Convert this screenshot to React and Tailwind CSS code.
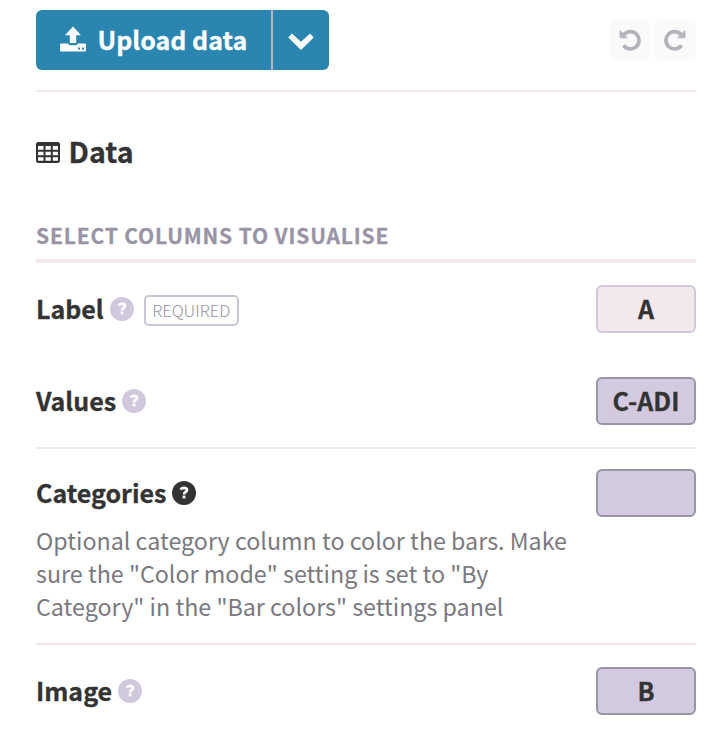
import React from "react";

function UploadIcon() {
  return (
    <svg width="26" height="26" viewBox="0 0 26 26" className="shrink-0">
      <path
        d="M13 0.5 L21 9.3 H16.2 V17 H9.8 V9.3 H5 Z"
        fill="#fff"
      />
      <path
        fillRule="evenodd"
        d="M1.2 17.4 H8 Q8.8 19.2 10.2 19.2 H15.8 Q17.2 19.2 18 17.4 H24.8 Q26 17.4 26 18.6 V24.2 Q26 25.4 24.8 25.4 H1.2 Q0 25.4 0 24.2 V18.6 Q0 17.4 1.2 17.4 Z M18 21.4 V23.4 H20 V21.4 Z M22 21.4 V23.4 H24 V21.4 Z"
        fill="#fff"
      />
    </svg>
  );
}

function ChevronIcon() {
  return (
    <svg width="26" height="18" viewBox="0 0 26 18">
      <path d="M3.9 0.6 L13 8.8 L22.1 0.6 L25.7 4.4 L13 17 L0.3 4.4 Z" fill="#fff" />
    </svg>
  );
}

function UndoIcon({ className = "" }) {
  return (
    <svg width="22" height="22" viewBox="0 0 22 22" className={className}>
      <path d="M5 5.6 A8.6 8.6 0 1 1 4.5 16.4" fill="none" stroke="#b1b4bb" strokeWidth="3.7" />
      <path d="M1 1.6 V8.8 H8.4 Z" fill="#b1b4bb" stroke="#b1b4bb" strokeWidth="0.8" strokeLinejoin="round" />
    </svg>
  );
}

function TableIcon() {
  return (
    <svg width="24" height="21" viewBox="0 0 24 21">
      <path
        fillRule="evenodd"
        fill="#333"
        d="M2.2 0 H21.8 Q24 0 24 2.2 V18.8 Q24 21 21.8 21 H2.2 Q0 21 0 18.8 V2.2 Q0 0 2.2 0 Z M2 4 V7.8 H7.5 V4 Z M9.5 4 V7.8 H14.8 V4 Z M16.8 4 V7.8 H22 V4 Z M2 9.8 V13.2 H7.5 V9.8 Z M9.5 9.8 V13.2 H14.8 V9.8 Z M16.8 9.8 V13.2 H22 V9.8 Z M2 15.2 V18.8 H7.5 V15.2 Z M9.5 15.2 V18.8 H14.8 V15.2 Z M16.8 15.2 V18.8 H22 V15.2 Z"
      />
    </svg>
  );
}

function HelpIcon({ color = "#d1c8de" }) {
  return (
    <svg width="24" height="24" viewBox="0 0 24 24" className="shrink-0">
      <circle cx="12" cy="12" r="12" fill={color} />
      <path
        d="M8.6 8.6 Q9.6 6.8 12 6.8 Q15 6.8 15 9 Q15 10.2 13.5 11 Q12.1 11.8 12.1 13.4"
        fill="none"
        stroke="#fff"
        strokeWidth="2.7"
      />
      <rect x="10.6" y="14.6" width="2.9" height="2.8" fill="#fff" />
    </svg>
  );
}

function Name({ children, color }) {
  return (
    <>
      <span className="-mt-0.5 text-[25px] font-bold leading-[36px] text-[#333] [-webkit-text-stroke:0.3px]">
        {children}
      </span>
      <span className="ml-1.5">
        <HelpIcon color={color} />
      </span>
    </>
  );
}

function ColumnBox({ children, light }) {
  return (
    <div
      className={
        "flex h-12 w-[100px] shrink-0 items-center justify-center rounded-md border-2 text-[25px] font-bold text-[#333] " +
        (light ? "border-[#d1c8de] bg-[#f3e8ec]" : "border-[#9894a5] bg-[#d4cae0]")
      }
    >
      <span className="-mt-0.5 leading-[36px] [-webkit-text-stroke:0.3px]">{children}</span>
    </div>
  );
}

export default function App() {
  return (
    <div className="h-[740px] w-[724px] overflow-hidden bg-white pl-9 pr-7 pt-2.5 font-['Noto_Sans_CJK_SC','Noto_Sans',sans-serif] whitespace-nowrap">
      <header className="flex h-[82px] items-start justify-between border-b-2 border-[#f3e8ec]">
        <div className="flex h-[60px] overflow-hidden rounded-md bg-[#2a85b1]">
          <button className="flex w-[235px] items-center pl-6 text-white">
            <span className="-mt-0.5">
              <UploadIcon />
            </span>
            <span className="-mt-0.5 ml-[11.5px] text-[25px] font-bold leading-[36px] [-webkit-text-stroke:0.3px]">
              Upload data
            </span>
          </button>
          <button className="flex w-[58px] items-center justify-center border-l-2 border-[#b5b9bf] pt-1">
            <ChevronIcon />
          </button>
        </div>
        <div className="flex gap-[3px] pt-2.5">
          <span className="flex h-10 w-[42px] items-center justify-center rounded-md bg-[#fcf9fa]">
            <UndoIcon />
          </span>
          <span className="flex h-10 w-[42px] items-center justify-center rounded-md bg-[#fcf9fa]">
            <UndoIcon className="-scale-x-100" />
          </span>
        </div>
      </header>

      <h1 className="mt-10 flex h-10 items-center gap-[8.5px] text-[28.6px] font-bold leading-10 text-[#333]">
        <TableIcon />
        <span className="-mt-0.5 [-webkit-text-stroke:0.3px]">Data</span>
      </h1>

      <h2 className="mt-[45px] flex h-[46px] items-start border-b-4 border-[#f3e8ec] text-[21px] font-bold leading-[36px] tracking-[0.84px] text-[#9995a6] [-webkit-text-stroke:0.3px]">
        SELECT COLUMNS TO VISUALISE
      </h2>

      <div className="mt-[22px] flex h-12 items-center justify-between">
        <div className="flex items-center">
          <Name>Label</Name>
          <span className="ml-2.5 mt-0.5 flex h-[31px] w-[95px] items-center justify-center rounded-[5px] border-2 border-[#cbc5da] text-[16.5px] font-light leading-[24px] text-[#9995a6]">
            REQUIRED
          </span>
        </div>
        <ColumnBox light>A</ColumnBox>
      </div>

      <div className="mt-11 flex h-[72px] items-start justify-between border-b-2 border-[#f3e8ec]">
        <div className="flex h-12 items-center">
          <Name>Values</Name>
        </div>
        <ColumnBox>C-ADI</ColumnBox>
      </div>

      <div className="flex h-[196px] items-start justify-between border-b-2 border-[#f3e8ec] pt-5">
        <div>
          <div className="flex h-12 items-center">
            <Name color="#333">Categories</Name>
          </div>
          <p className="mt-[7px] text-[23.28px] leading-[33px] text-[#7b7980]">
            Optional category column to color the bars. Make
            <br />
            sure the "Color mode" setting is set to "By
            <br />
            Category" in the "Bar colors" settings panel
          </p>
        </div>
        <ColumnBox />
      </div>

      <div className="mt-[22px] flex h-12 items-center justify-between">
        <div className="flex items-center">
          <Name>Image</Name>
        </div>
        <ColumnBox>B</ColumnBox>
      </div>
    </div>
  );
}
